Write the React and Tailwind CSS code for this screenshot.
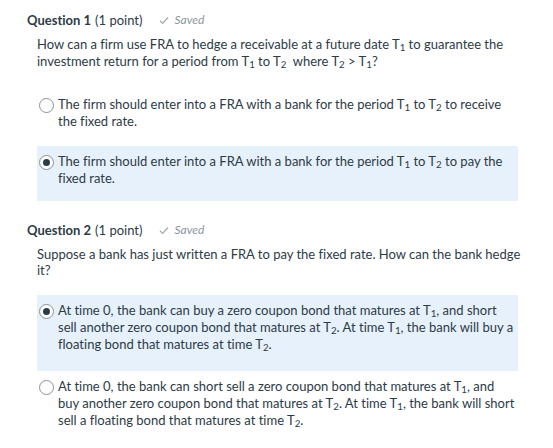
const T = ({ n }) => (
  <>
    T<sub>{n}</sub>
  </>
);

function Radio({ checked }) {
  return (
    <span className="mt-[2px] flex h-[15px] w-[15px] shrink-0 items-center justify-center rounded-full border border-[#8a9299] bg-white">
      {checked && <span className="h-[7px] w-[7px] rounded-full bg-[#2d3b45]" />}
    </span>
  );
}

function Option({ checked, children, className = '' }) {
  return (
    <div className={`flex gap-[4px] pl-[2px] pr-[2px] pt-[7px] ${checked ? 'bg-[#e6f1fb]' : ''} ${className}`}>
      <Radio checked={checked} />
      <p className="leading-[17px]">{children}</p>
    </div>
  );
}

function Header({ n }) {
  return (
    <div className="flex items-center leading-[18px]">
      <span className="text-[13px] font-bold">Question {n}</span>
      <span className="ml-[4px] text-[13px]">(1 point)</span>
      <span className="ml-[17px] flex items-center gap-[5px] text-[12px] italic text-[#8b969e]">
        <svg width="10" height="9" viewBox="0 0 10 9" fill="none" stroke="#a2abb2" strokeWidth="1.3">
          <path d="M1 4.8 L3.6 7.4 L9 1.5" />
        </svg>
        Saved
      </span>
    </div>
  );
}

export default function App() {
  return (
    <div
      className="h-[448px] w-[553px] bg-white pl-[27px] pt-[11px] text-[13px] text-[#2d3b45] [font-variant-ligatures:none]"
      style={{ fontFamily: 'Lato, "Open Sans", sans-serif' }}
    >
      <div className="w-[493px]">
        <Header n={1} />
        <div className="pl-[10px]">
          <p className="mt-[7px] pr-[8px] leading-[17px]">
            How can a firm use FRA to hedge a receivable at a future date <T n={1} /> to guarantee the investment
            return for a period from <T n={1} /> to <T n={2} />&nbsp; where <T n={2} /> &gt; <T n={1} />?
          </p>
          <div className="mt-[19px] w-[481px]">
            <Option className="h-[57px]">
              The firm should enter into a FRA with a bank for the period <T n={1} /> to <T n={2} /> to receive the
              fixed rate.
            </Option>
            <Option checked className="h-[55px]">
              The firm should enter into a FRA with a bank for the period <T n={1} /> to <T n={2} /> to pay the fixed
              rate.
            </Option>
          </div>
        </div>

        <div className="mt-[20px]">
          <Header n={2} />
        </div>
        <div className="pl-[10px]">
          <p className="mt-[7px] w-[492px] leading-[16px]">
            Suppose a bank has just written a FRA to pay the fixed rate. How can the bank hedge it?
          </p>
          <div className="mt-[17px] w-[481px]">
            <Option checked className="h-[76px]">
              At time 0, the bank can buy a zero coupon bond that matures at <T n={1} />, and short sell another zero
              coupon bond that matures at <T n={2} />. At time <T n={1} />, the bank will buy a floating bond that
              matures at time <T n={2} />.
            </Option>
            <Option className="h-[76px]">
              At time 0, the bank can short sell a zero coupon bond that matures at <T n={1} />, and buy another zero
              coupon bond that matures at <T n={2} />. At time <T n={1} />, the bank will short sell a floating bond
              that matures at time <T n={2} />.
            </Option>
          </div>
        </div>
      </div>
    </div>
  );
}
